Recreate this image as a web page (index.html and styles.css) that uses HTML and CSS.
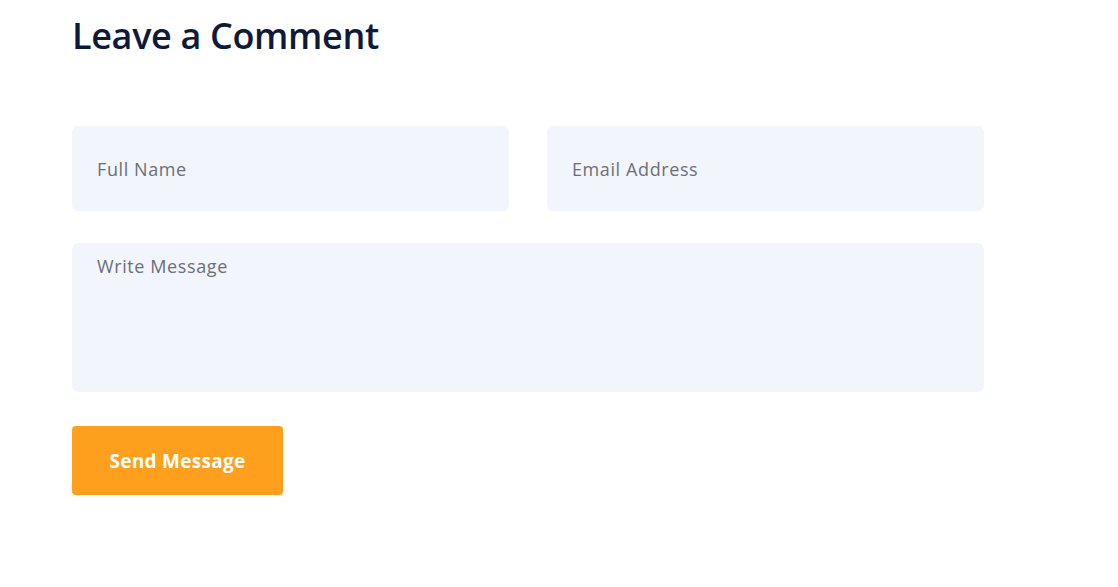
FILE: index.html
```html
<!DOCTYPE html>
<html lang="en">
<head>
<meta charset="utf-8">
<title>Leave a Comment</title>
<link rel="stylesheet" href="styles.css">
</head>
<body>
<section class="comment">
  <h2 class="comment-title">Leave a Comment</h2>
  <form class="comment-form">
    <div class="row">
      <input class="field" type="text" placeholder="Full Name">
      <input class="field" type="email" placeholder="Email Address">
    </div>
    <textarea class="field message" placeholder="Write Message"></textarea>
    <button class="send" type="button">Send Message</button>
  </form>
</section>
</body>
</html>
```
FILE: styles.css
```css
* { box-sizing: border-box; }
html, body { margin: 0; padding: 0; background: #ffffff; }
body { font-family: "Open Sans", "Noto Sans", sans-serif; }

.comment {
  width: 912px;
  margin-left: 72px;
  padding-top: 12px;
}

.comment-title {
  margin: 0;
  font-size: 36px;
  line-height: 48px;
  font-weight: 600;
  color: #0e1a3a;
  letter-spacing: -0.35px;
}

.comment-form {
  margin-top: 66px;
  display: flex;
  flex-direction: column;
  gap: 32px;
  align-items: flex-start;
}

.row {
  width: 100%;
  display: grid;
  grid-template-columns: 1fr 1fr;
  gap: 38px;
}

.field {
  display: block;
  width: 100%;
  height: 85px;
  border: none;
  outline: none;
  border-radius: 6px;
  background: #f2f6fc;
  padding: 0 25px;
  font-family: "Open Sans", "Noto Sans", sans-serif;
  font-size: 18px;
  letter-spacing: 0.6px;
  color: #666b73;
}

.field::placeholder { color: #6b6f76; opacity: 1; }

.message {
  height: 149px;
  padding-top: 11px;
  resize: none;
}

.send {
  margin-top: 2px;
  width: 211px;
  height: 69px;
  border: none;
  border-radius: 4px;
  background: #fe9f1e;
  color: #ffffff;
  font-family: "Open Sans", "Noto Sans", sans-serif;
  font-size: 19px;
  letter-spacing: 0.3px;
  font-weight: 700;
  cursor: pointer;
}
```
